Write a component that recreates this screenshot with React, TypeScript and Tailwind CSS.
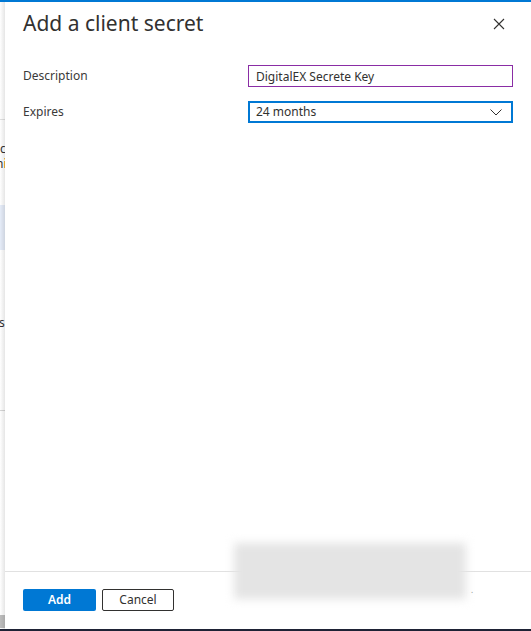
import React from 'react';

// Partially hidden page behind the side panel
function BackgroundStrip() {
  return (
    <div className="relative w-[5px] shrink-0 overflow-hidden bg-white">
      <span className="absolute left-0 top-[138px] text-[12px] text-[#323130]">c</span>
      <span className="absolute left-[-4px] top-[153px] text-[12px] text-[#323130]">
        n<span className="text-[#d47500]">i</span>
      </span>
      <div className="absolute left-0 top-[203px] h-[45px] w-full bg-[#e5ecf8]" />
      <span className="absolute left-[-1px] top-[312px] text-[12px] text-[#323130]">s</span>
      <div className="absolute left-0 top-[117px] h-px w-full bg-[#e1e1e1]" />
      <div className="absolute left-0 top-[408px] h-px w-full bg-[#d6d6d6]" />
      <div className="absolute left-0 top-[613px] h-[13px] w-full bg-[#bdbdbd]" />
      <div className="absolute inset-0 bg-gradient-to-r from-black/0 to-black/10" />
    </div>
  );
}

export default function App() {
  return (
    <div
      className="relative flex h-[631px] w-[531px] flex-col overflow-hidden bg-white text-[#323130]"
      style={{ fontFamily: '"Noto Sans", "Liberation Sans", sans-serif' }}
    >
      <div className="h-[2px] shrink-0 bg-[#0078d4]" />
      <div className="flex min-h-0 flex-1">
        <BackgroundStrip />

        {/* Panel */}
        <div className="flex min-w-0 flex-1 flex-col">
          {/* Header */}
          <div className="flex items-start justify-between pl-[18px] pr-[26px] pt-[7px]">
            <h1 className="text-[21px] font-normal leading-[28px] text-[#323130]">
              Add a client secret
            </h1>
            <button aria-label="Close" className="mt-[9px] text-[#323130]">
              <svg width="12" height="12" viewBox="0 0 12 12" fill="none">
                <path d="M1 1L11 11M11 1L1 11" stroke="currentColor" strokeWidth="1.1" />
              </svg>
            </button>
          </div>

          {/* Form */}
          <div className="mt-[28px] flex flex-col gap-[14px] pl-[18px] pr-[18px]">
            <div className="flex items-center">
              <label className="w-[225px] text-[12px] text-[#3b3a39]">Description</label>
              <input
                defaultValue="DigitalEX Secrete Key"
                className="h-[22px] flex-1 border border-[#8a2da5] px-[7px] text-[12px] text-[#323130] outline-none"
              />
            </div>
            <div className="flex items-center">
              <label className="w-[225px] text-[12px] text-[#3b3a39]">Expires</label>
              <div className="flex h-[22px] flex-1 items-center justify-between border-2 border-[#0078d4] px-[6px] text-[12px]">
                <span>24 months</span>
                <svg width="12" height="7" viewBox="0 0 12 7" fill="none" className="mr-[3px]">
                  <path d="M0.5 0.5L6 6L11.5 0.5" stroke="#323130" strokeWidth="1" />
                </svg>
              </div>
            </div>
          </div>

          <div className="flex-1" />

          {/* Footer */}
          <div className="relative border-t border-[#e1e1e1]">
            <div className="flex gap-[6px] pb-[18px] pl-[18px] pt-[17px]">
              <button className="h-[22px] w-[73px] rounded-[2px] bg-[#0078d4] text-[12px] font-semibold text-white">
                Add
              </button>
              <button className="h-[22px] w-[72px] rounded-[2px] border border-[#323130] bg-white text-[12px] text-[#323130]">
                Cancel
              </button>
            </div>
            <span className="absolute left-[466px] top-[12px] text-[8px] text-[#888]">.</span>
          </div>
        </div>
      </div>
      <div className="h-[2px] shrink-0 bg-[#1e2235]" />

      {/* blurred redaction */}
      <div className="pointer-events-none absolute left-[234px] top-[543px] h-[56px] w-[232px] bg-[#e4e4e4] blur-[5px]" />
    </div>
  );
}
